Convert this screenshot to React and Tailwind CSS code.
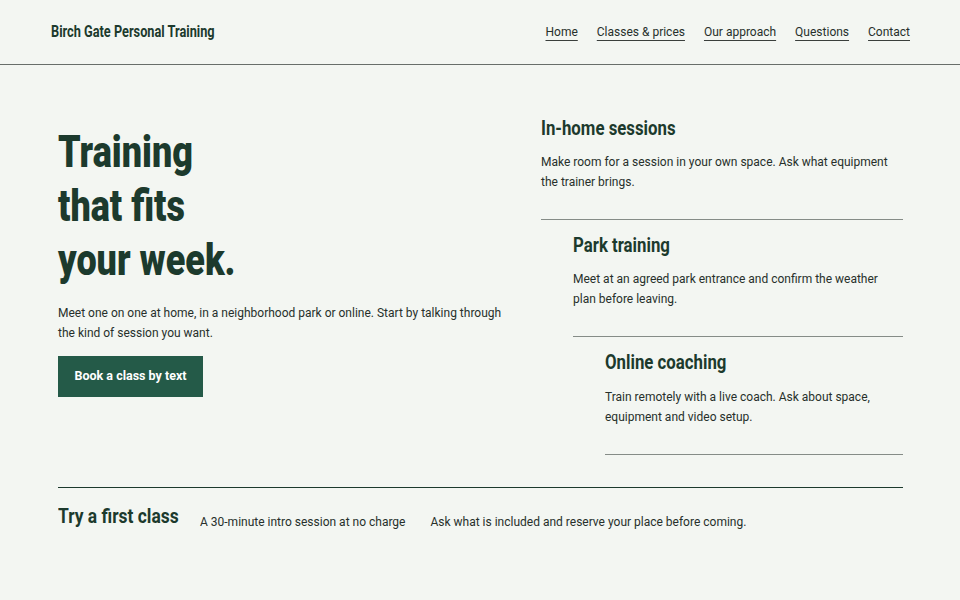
import React from 'react';

// Roboto squeezed horizontally stands in for the condensed display face
const display = "font-['Roboto',sans-serif] text-[#1c3a2d] origin-left whitespace-nowrap";

const navLinks = ['Home', 'Classes & prices', 'Our approach', 'Questions', 'Contact'];

const sessions = [
  {
    title: 'In-home sessions',
    text: 'Make room for a session in your own space. Ask what equipment the trainer brings.',
    box: 'ml-0 pt-0',
    gap: 'mt-[10px]',
  },
  {
    title: 'Park training',
    text: 'Meet at an agreed park entrance and confirm the weather plan before leaving.',
    box: 'ml-8 pt-[11px]',
    gap: 'mt-[10px]',
  },
  {
    title: 'Online coaching',
    text: 'Train remotely with a live coach. Ask about space, equipment and video setup.',
    box: 'ml-16 pt-[11px]',
    gap: 'mt-[11px]',
  },
];

function App() {
  return (
    <div className="min-h-screen bg-[#f3f6f2] text-[#27302b] font-['Roboto',sans-serif]">
      {/* header */}
      <header className="h-[65px] border-b border-[#686e6a] pl-[51px] pr-[50px] flex items-center justify-between">
        <div className={`${display} text-[17px] font-bold scale-x-[0.75]`}>Birch Gate Personal Training</div>
        <nav className="flex items-center gap-[19px]">
          {navLinks.map((l) => (
            <a key={l} href="#" className="text-[12px] text-[#27302b] underline underline-offset-[4px] decoration-[#3a3f3c]">
              {l}
            </a>
          ))}
        </nav>
      </header>

      <main className="pl-[58px] pr-[57px] pt-[49px]">
        <div className="grid grid-cols-[1fr_362px] gap-8">
          {/* hero */}
          <div className="mt-[11px]">
            <h1 className={`${display} text-[45px] leading-[54px] font-black scale-x-[0.8]`}>
              Training<br />that fits<br />your week.
            </h1>
            <p className="mt-[16px] text-[12px] leading-5 max-w-[452px]">
              Meet one on one at home, in a neighborhood park or online. Start by talking through the kind of session you want.
            </p>
            <button className="mt-[13px] h-[41px] w-[145px] bg-[#245a48] text-white text-[12.5px] font-bold">
              Book a class by text
            </button>
          </div>

          {/* session types */}
          <div className="flex flex-col">
            {sessions.map((s) => (
              <div key={s.title} className={`${s.box} border-b border-[#858c87] pb-[27px]`}>
                <h2 className={`${display} text-[21px] leading-7 font-bold scale-x-[0.8]`}>{s.title}</h2>
                <p className={`${s.gap} text-[12px] leading-5`}>{s.text}</p>
              </div>
            ))}
          </div>
        </div>

        {/* first class strip */}
        <div className="mt-[32px] border-t border-[#1c3a2d] pt-[14px] flex items-start">
          <div className="w-[142px] shrink-0">
            <h2 className={`${display} text-[21px] leading-7 font-bold scale-x-[0.83]`}>Try a first class</h2>
          </div>
          <span className="mt-[10px] text-[12px] leading-5">A 30-minute intro session at no charge</span>
          <span className="mt-[10px] ml-[25px] text-[12px] leading-5">Ask what is included and reserve your place before coming.</span>
        </div>
      </main>
    </div>
  );
}

export default App;
